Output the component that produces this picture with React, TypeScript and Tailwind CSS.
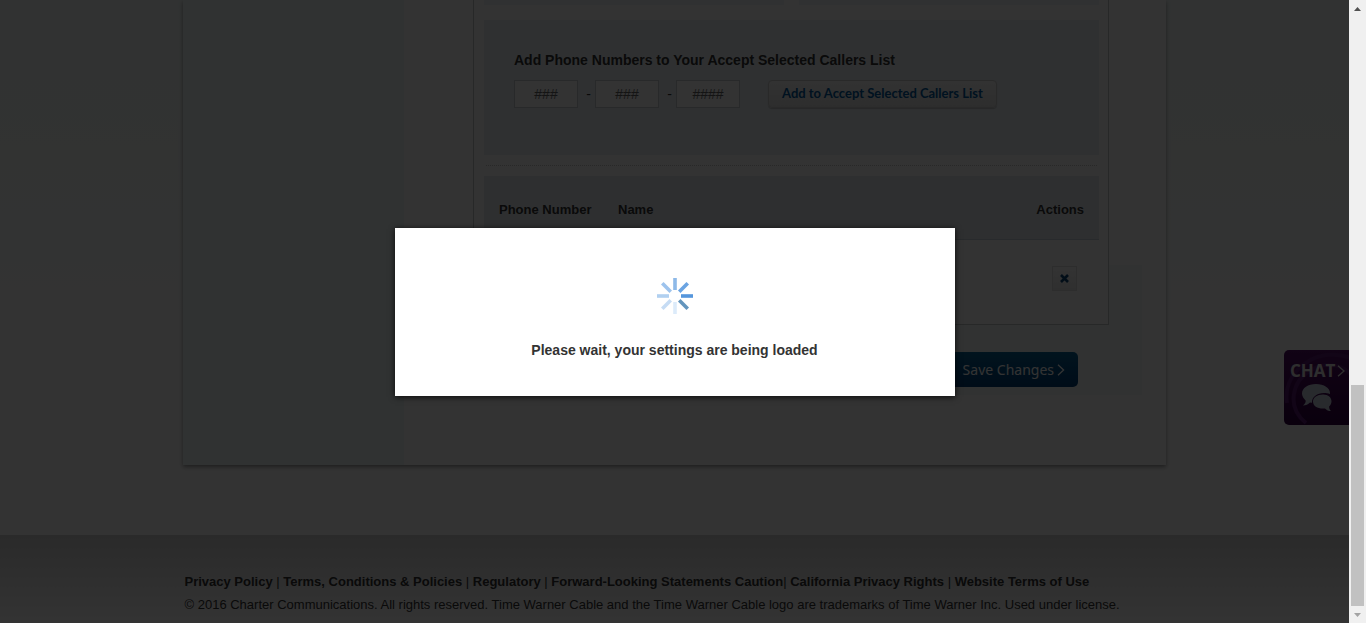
import React from "react";

const footerLinks = [
  { label: "Privacy Policy", separator: " | " },
  { label: "Terms, Conditions & Policies", separator: " | " },
  { label: "Regulatory", separator: " | " },
  { label: "Forward-Looking Statements Caution", separator: "| " },
  { label: "California Privacy Rights", separator: " | " },
  { label: "Website Terms of Use", separator: "" },
];

function PhoneField({ label, placeholder, length }: { label: string; placeholder: string; length: number }) {
  return (
    <input
      type="text"
      aria-label={label}
      placeholder={placeholder}
      maxLength={length}
      className="h-7 w-16 border border-[#c8ccd0] bg-white text-center text-sm text-[#333] placeholder:text-[#666]"
    />
  );
}

function AddNumbers() {
  return (
    <section className="mt-[15px] h-[135px] bg-[#ebf0f5] px-[30px] pt-[30px]">
      <h2 className="text-sm leading-5 font-bold text-[#333]">Add Phone Numbers to Your Accept Selected Callers List</h2>
      <form className="mt-[10px] flex items-center" onSubmit={(e) => e.preventDefault()}>
        <PhoneField label="Area code" placeholder="###" length={3} />
        <span className="w-[17px] pr-1 text-right text-sm text-[#333]">-</span>
        <PhoneField label="Prefix" placeholder="###" length={3} />
        <span className="w-[17px] pr-1 text-right text-sm text-[#333]">-</span>
        <PhoneField label="Line number" placeholder="####" length={4} />
        <button
          type="submit"
          className="ml-7 h-7 rounded border border-[#ccc] bg-linear-to-b from-[#fafafa] to-[#e1e1e1] px-[13px] font-[Lato,sans-serif] text-[13px] font-bold whitespace-nowrap text-[#005aa0] shadow-[0_1px_1px_rgba(0,0,0,0.2)]"
        >
          Add to Accept Selected Callers List
        </button>
      </form>
    </section>
  );
}

function CallerTable() {
  return (
    <table className="w-full border-collapse text-[13px] text-[#333]">
      <thead className="bg-[#e6ebf0]">
        <tr className="h-[63px] border-b border-[#c8d2dc] text-left">
          <th scope="col" className="w-[119px] pt-1 pl-[15px] font-bold whitespace-nowrap">Phone Number</th>
          <th scope="col" className="pt-1 pl-[15px] font-bold">Name</th>
          <th scope="col" className="w-20 pt-1 pr-[15px] text-right font-bold">Actions</th>
        </tr>
      </thead>
      <tbody>
        <tr className="h-[78px]">
          <td />
          <td />
          <td className="pr-[22px]">
            <button
              type="button"
              aria-label="Remove"
              className="ml-auto flex size-[25px] items-center justify-center border border-[#e1e1e1] bg-linear-to-b from-white to-[#ebebeb] text-[#0a4678]"
            >
              <svg viewBox="0 0 9 9" className="size-[9px]" fill="none" stroke="currentColor" strokeWidth="2.6">
                <path d="M1 1 8 8M8 1 1 8" />
              </svg>
            </button>
          </td>
        </tr>
      </tbody>
    </table>
  );
}

function Settings() {
  return (
    <div className="relative mr-[57px] ml-[69px] flex-1 pb-[78px]">
      <div className="absolute top-[265px] -right-[33px] h-[130px] w-[240px] bg-[#f5faf8]" />
      <div className="relative border border-t-0 border-[#c3c6c8] bg-white pr-[9px] pb-[7px] pl-[10px]">
        <div className="grid grid-cols-2 gap-[15px]">
          <div className="h-[5px] bg-[#f0f3f7]" />
          <div className="h-[5px] bg-[#f0f3f7]" />
        </div>
        <AddNumbers />
        <hr className="mx-0.5 mt-[10px] mb-[10px] border-t border-dotted border-[#c8c8c8]" />
        <CallerTable />
      </div>
      <div className="relative mt-[27px] flex justify-end pr-[31px]">
        <button
          type="button"
          className="flex h-[35px] items-center rounded-[5px] bg-linear-to-b from-[#0a6496] to-[#003c78] pr-[13px] pl-4 font-['Noto_Sans',sans-serif] text-sm text-white"
        >
          Save Changes
          <svg viewBox="0 0 8 12" className="ml-[3px] h-3 w-2" fill="none" stroke="currentColor" strokeWidth="1.3">
            <path d="M1 .7 6.6 6 1 11.3" />
          </svg>
        </button>
      </div>
    </div>
  );
}

function Footer() {
  return (
    <footer className="flex-1 bg-linear-to-b from-[#d2d2d2] to-white pt-[35px] pb-[7px] text-[13px] leading-[23px] text-[#333]">
      <div className="mx-auto w-full max-w-[980px]">
        <p className="font-bold">
          {footerLinks.map((link) => (
            <React.Fragment key={link.label}>
              <a href="#">{link.label}</a>
              <span className="font-normal whitespace-pre">{link.separator}</span>
            </React.Fragment>
          ))}
        </p>
        <p>
          © 2016 Charter Communications. All rights reserved. Time Warner Cable and the Time Warner Cable logo are
          trademarks of Time Warner Inc. Used under license.
        </p>
      </div>
    </footer>
  );
}

function ChatTab() {
  return (
    <button
      type="button"
      className="absolute top-[350px] right-0 h-[75px] w-[65px] overflow-hidden rounded-l-[5px] bg-linear-to-b from-[#550f69] to-[#320041] text-[#e6e6e6]"
    >
      <svg viewBox="0 0 65 75" className="absolute inset-0 size-full" fill="none" stroke="#5a1973" strokeWidth="4">
        <path d="M3 53C-1 28 20 8 42 5c12-1 20 1 25 3M22 73C2 57 8 31 27 20c16-9 34-5 42 7" />
      </svg>
      <span className="absolute top-[9px] left-[6px] flex items-center font-['Open_Sans',sans-serif] text-[17px] leading-6 font-bold">
        CHAT
        <svg viewBox="0 0 8 12" className="ml-0.5 h-3 w-2" fill="none" stroke="currentColor" strokeWidth="1.3">
          <path d="M1 .7 7 6 1 11.3" />
        </svg>
      </span>
      <svg viewBox="0 0 30 28" className="absolute top-[34px] left-[18px] h-7 w-[30px]" fill="#c8d2e1">
        <path d="M14 0c8 0 14 4 14 9v1c-2-1-4-1-6-1-7 0-12 4-12 9v.7l-2-.3c-2 2-4 3-7 3 2-2 3-3 2.600-5C1.500 14.500 0 12 0 9.500 0 4 6 0 14 0Z" />
        <path d="M21 10.500c5.400 0 8.500 3 8.500 6.800 0 2.200-1 4-2.400 5.200 0 2 .8 3.500 1.900 4.500-2.600 0-4.500-1-6-2.600-6.800.7-12-2.200-12-7 0-4 4.200-6.900 10-6.900Z" />
      </svg>
    </button>
  );
}

const spokes = [
  { angle: 0, color: "#8db9e8" },
  { angle: 45, color: "#6ba4e2" },
  { angle: 90, color: "#5596dc" },
  { angle: 135, color: "#6395bd" },
  { angle: 180, color: "#dcebfa" },
  { angle: 225, color: "#c6dcf4" },
  { angle: 270, color: "#b1d0f0" },
  { angle: 315, color: "#9dc3ed" },
];

function LoadingDialog() {
  return (
    <div
      role="dialog"
      aria-label="Loading"
      className="flex h-[168px] w-[560px] flex-col items-center bg-white pt-[50px] shadow-[0_1px_6px_rgba(0,0,0,0.8)]"
    >
      <svg viewBox="0 0 36 36" className="size-9">
        {spokes.map((s) => (
          <rect key={s.angle} x="16.2" y="0" width="3.6" height="12" fill={s.color} transform={`rotate(${s.angle} 18 18)`} />
        ))}
      </svg>
      <p className="mt-[26px] text-sm leading-5 font-bold text-[#333]">Please wait, your settings are being loaded</p>
    </div>
  );
}

function Scrollbar() {
  return (
    <div aria-hidden="true" className="flex w-[17px] shrink-0 flex-col items-center bg-[#f0f0f0]">
      <svg viewBox="0 0 17 17" className="size-[17px]" fill="#505050">
        <path d="M5 11h7L8.500 7Z" />
      </svg>
      <div className="flex w-full flex-1 flex-col justify-end px-0.5">
        <div className="h-[221px] bg-[#c1c1c1]" />
      </div>
      <svg viewBox="0 0 17 17" className="size-[17px]" fill="#a3a3a3">
        <path d="M5 7h7L8.500 11Z" />
      </svg>
    </div>
  );
}

export default function App() {
  return (
    <div className="flex min-h-screen bg-white font-['Liberation_Sans',Arial,sans-serif]">
      <div className="relative flex min-w-0 flex-1 flex-col bg-linear-to-b from-[#f2faf8] to-white to-60%">
        <main className="mx-auto mb-[70px] flex w-full max-w-[983px] bg-white shadow-[0_2px_4px_rgba(0,0,0,0.4)]">
          <aside className="w-[221px] shrink-0 bg-[#f0faf8]" />
          <Settings />
        </main>
        <Footer />
        <ChatTab />
        <div className="absolute inset-0 flex items-center justify-center bg-black/80">
          <LoadingDialog />
        </div>
      </div>
      <Scrollbar />
    </div>
  );
}
